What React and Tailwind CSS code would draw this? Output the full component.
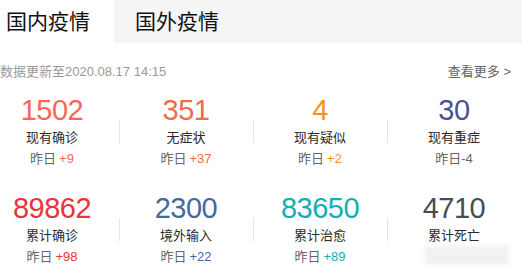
import React from "react";

const stats = [
  { num: "1502", label: "现有确诊", delta: "+9", color: "text-[#fb6756]", dcolor: "text-[#fb6756]" },
  { num: "351", label: "无症状", delta: "+37", color: "text-[#ee6c48]", dcolor: "text-[#ee6c48]" },
  { num: "4", label: "现有疑似", delta: "+2", color: "text-[#ef941b]", dcolor: "text-[#ef941b]" },
  { num: "30", label: "现有重症", delta: "-4", color: "text-[#4f4f95]", dcolor: "text-[#666666]" },
  { num: "89862", label: "累计确诊", delta: "+98", color: "text-[#e8353a]", dcolor: "text-[#e8353a]" },
  { num: "2300", label: "境外输入", delta: "+22", color: "text-[#46699d]", dcolor: "text-[#46699d]" },
  { num: "83650", label: "累计治愈", delta: "+89", color: "text-[#17adb4]", dcolor: "text-[#17adb4]" },
  { num: "4710", label: "累计死亡", delta: null, color: "text-[#474d57]", dcolor: "text-[#666666]" },
];

function Cell({ s, i }) {
  const divider = i % 4 !== 0;
  return (
    <div
      className={
        "relative flex flex-col items-center " +
        (divider
          ? "before:absolute before:left-0 before:top-[26px] before:h-[23px] before:w-px before:bg-[#e6e6e6] before:content-['']"
          : "")
      }
    >
      <div
        className={"h-[32px] text-[29px] leading-[32px] tracking-[-0.5px] " + s.color}
        style={{ fontFamily: '"Liberation Sans", Arial, sans-serif' }}
      >
        {s.num}
      </div>
      <div className="mt-[1.5px] h-[20px] text-[13px] leading-[20px] text-[#2a2a2a]">{s.label}</div>
      <div className="mt-[1.5px] h-[20px] text-[13px] leading-[20px] text-[#666666]">
        {s.delta !== null ? (
          <>
            昨日
            <span className={(s.delta.startsWith("+") ? "ml-[3px] " : "") + s.dcolor}>{s.delta}</span>
          </>
        ) : (
          <div className="ml-[26px] mt-[-1px] h-[19px] w-[84px] bg-[#f1f1f1] blur-[2px]" />
        )}
      </div>
    </div>
  );
}

export default function App() {
  return (
    <div
      className="h-[272px] w-[522px] overflow-hidden bg-white"
      style={{ fontFamily: '"Liberation Sans", "Noto Sans CJK SC", sans-serif' }}
    >
      <div className="flex h-[43px] bg-[#f5f5f5]">
        <div className="flex w-[114px] items-center bg-white pl-[6px] text-[21px] leading-none text-[#111111]">
          国内疫情
        </div>
        <div className="flex items-center pl-[21px] text-[21px] leading-none text-[#111111]">国外疫情</div>
      </div>
      <div className="mt-[19px] flex h-[20px] items-center justify-between pr-[11px] text-[13px] leading-[20px]">
        <span className="text-[#9a9a9a]">数据更新至2020.08.17 14:15</span>
        <span className="text-[#666666]">查看更多 &gt;</span>
      </div>
      <div className="ml-[-15px] mt-[12px] grid w-[536px] grid-cols-4 gap-y-[23px]">
        {stats.map((s, i) => (
          <Cell key={i} s={s} i={i} />
        ))}
      </div>
    </div>
  );
}
